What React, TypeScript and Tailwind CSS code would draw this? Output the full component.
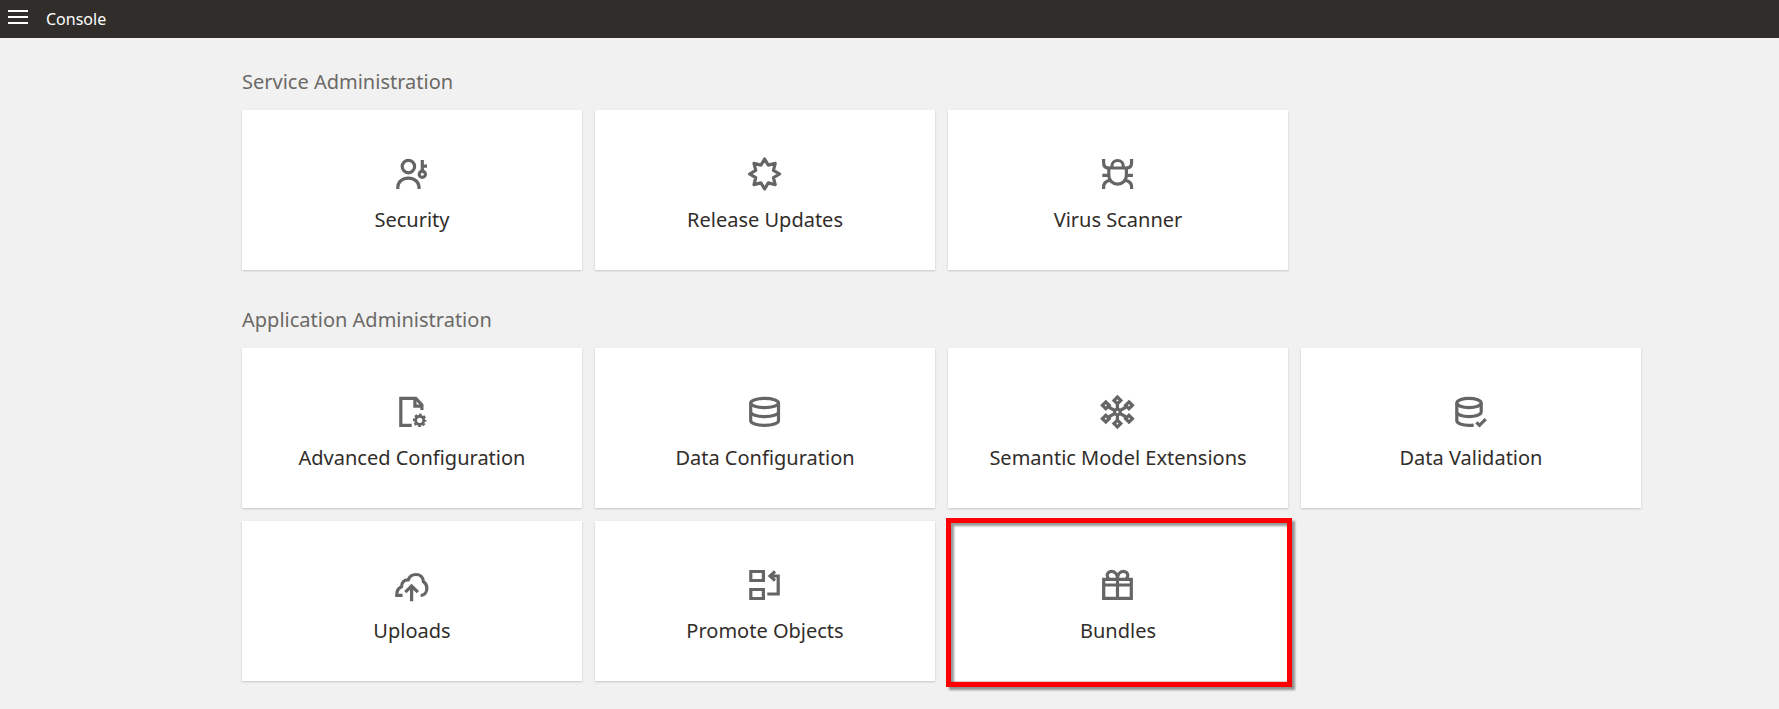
import type { ReactNode } from "react";

type Tile = { label: string; icon: ReactNode; highlighted?: boolean };
type Section = { title: string; tiles: Tile[] };

function Icon({ children }: { children: ReactNode }) {
  return (
    <svg
      viewBox="0 0 40 40"
      aria-hidden="true"
      className="size-10 fill-none stroke-[#666565] stroke-[3.2]"
    >
      {children}
    </svg>
  );
}

const starPoints = Array.from({ length: 16 }, (_, i) => {
  const angle = (i * Math.PI) / 8 - Math.PI / 2;
  const radius = i % 2 === 0 ? 15 : 9.6;
  return `${(19.6 + radius * Math.cos(angle)).toFixed(2)},${(20 + radius * Math.sin(angle)).toFixed(2)}`;
}).join(" ");

const securityIcon = (
  <Icon>
    <circle cx="16.4" cy="12.6" r="6.2" />
    <path d="M5.8 35v-2c0-5 4.5-8.900 10.600-8.900s10.600 3.900 10.600 8.900v2" />
    <circle cx="30.3" cy="20.3" r="3.1" />
    <path d="M30.3 6v11.400M30.300 12.200H35" />
  </Icon>
);

const updatesIcon = (
  <Icon>
    <polygon points={starPoints} strokeLinejoin="round" />
  </Icon>
);

const virusIcon = (
  <Icon>
    <path d="M13.9 14v-1.8a5.7 5.7 0 0 1 11.4 0V14" />
    <path d="M10.8 14h17.6v7.4a8.8 8.8 0 0 1-17.6 0z" />
    <path d="M5.6 5v3.4c0 3.4 1.8 5.6 5.2 5.6M33.6 5v3.4c0 3.4-1.8 5.6-5.2 5.6" />
    <path d="M4.3 21.4h6.5M28.4 21.4h6.5" />
    <path d="M5.6 35v-2c0-3.6 2.6-6 6.4-6.6M33.6 35v-2c0-3.6-2.6-6-6.4-6.6" />
  </Icon>
);

const advancedIcon = (
  <Icon>
    <path d="M19.7 33.4H8.8V6.4h15l6.1 6.4V18" />
    <path d="M22.9 6.4v7.8h7" />
    <circle cx="27.7" cy="28.3" r="4.1" strokeWidth="2.9" />
    <circle
      cx="27.7"
      cy="28.3"
      r="5.8"
      strokeWidth="2"
      strokeDasharray="2.6 1.955"
      strokeDashoffset="1.3"
    />
  </Icon>
);

const dataIcon = (
  <Icon>
    <ellipse cx="19.6" cy="11" rx="13.9" ry="4.6" />
    <path d="M5.7 11v17.8c0 2.6 6.2 4.6 13.9 4.6s13.9-2 13.9-4.6V11" />
    <path d="M5.7 20c0 2.6 6.2 4.6 13.9 4.6s13.9-2 13.9-4.6" />
  </Icon>
);

const nodes = [
  [19.4, 8.4],
  [31, 13.3],
  [31, 26.7],
  [19.4, 31.6],
  [7.8, 26.7],
  [7.8, 13.3],
];

const semanticIcon = (
  <Icon>
    {nodes.map(([x, y]) => (
      <path key={`${x}-${y}`} d={`M${x} ${y - 3.4}l3.4 3.4l-3.4 3.4l-3.4 -3.4z`} />
    ))}
    <circle cx="19.4" cy="20" r="2.8" />
    <path d="M19.4 12v5.4M19.4 22.6V28M10.6 15l6.4 3.6M28.2 15l-6.4 3.6M10.6 25l6.4-3.6M28.2 25l-6.4-3.6" />
  </Icon>
);

const validationIcon = (
  <Icon>
    <ellipse cx="18" cy="11" rx="12.2" ry="4.6" />
    <path d="M22.7 33.1c-1.5.2-3.1.3-4.7.3-6.7 0-12.2-2-12.2-4.6V11" />
    <path d="M5.8 20c0 2.6 5.5 4.6 12.2 4.6s12.2-2 12.2-4.6V11" />
    <path d="M25.4 30.3l3.1 3 6.2-6.2" />
  </Icon>
);

const uploadIcon = (
  <Icon>
    <path d="M10.6 30.4H4.8v-1.2c0-3.6 1.8-6.2 4.7-7.4 0-4.5 2.7-7.2 6.8-7 1.2-3.3 4.2-5.3 7.7-5.3 4.2 0 7.2 3 7.4 7.1 2.3 1.5 3.5 4 3.5 6.7 0 3.8-2.3 7-6.2 7.3" />
    <path d="M19.6 36.3V21.2M13.3 27.2l6.3-6.2 6.3 6.2" />
  </Icon>
);

const promoteIcon = (
  <Icon>
    <path d="M5.8 6.500h12.600v9H5.800zM5.800 24.500h12.600v9H5.800z" />
    <path d="M22.3 29h10.900V11h-8.400M30 6.300L25 11l5 4.700" />
  </Icon>
);

const bundleIcon = (
  <Icon>
    <path d="M5.7 14.4h27.6v19H5.7zM5.7 20h27.6M19.5 13v20.4" />
    <path d="M19.5 14.4c0-4.6-2.2-8-5.800-8-2.600 0-4.500 1.700-4.500 4.100 0 1.600.8 2.900 2 3.900M19.500 14.400c0-4.600 2.200-8 5.800-8 2.600 0 4.500 1.700 4.500 4.100 0 1.600-.8 2.900-2 3.900" />
  </Icon>
);

const sections: Section[] = [
  {
    title: "Service Administration",
    tiles: [
      { label: "Security", icon: securityIcon },
      { label: "Release Updates", icon: updatesIcon },
      { label: "Virus Scanner", icon: virusIcon },
    ],
  },
  {
    title: "Application Administration",
    tiles: [
      { label: "Advanced Configuration", icon: advancedIcon },
      { label: "Data Configuration", icon: dataIcon },
      { label: "Semantic Model Extensions", icon: semanticIcon },
      { label: "Data Validation", icon: validationIcon },
      { label: "Uploads", icon: uploadIcon },
      { label: "Promote Objects", icon: promoteIcon },
      { label: "Bundles", icon: bundleIcon, highlighted: true },
    ],
  },
];

function TileCard({ label, icon, highlighted }: Tile) {
  return (
    <li className="relative">
      <a
        href="#"
        className="flex flex-col items-center gap-3 bg-white pt-11 pb-9 text-xl leading-7 text-[#312d2a] shadow-[0_1px_2px_rgba(0,0,0,0.18)]"
      >
        {icon}
        {label}
      </a>
      {highlighted && (
        <span className="pointer-events-none absolute -top-[3px] -right-1 -bottom-1.5 -left-0.5 border-5 border-[#ff0000] drop-shadow-[3px_3px_1px_rgba(0,0,0,0.4)]" />
      )}
    </li>
  );
}

export default function App() {
  return (
    <div className="min-h-screen bg-[#f1f1f1] font-['Noto_Sans',sans-serif]">
      <header className="flex h-[38px] items-center gap-[18px] bg-[#312d2a] px-2 text-white">
        <button
          type="button"
          aria-label="Open navigation menu"
          className="flex w-5 flex-col gap-1 pb-1"
        >
          <span className="h-0.5 w-full bg-white" />
          <span className="h-0.5 w-full bg-white" />
          <span className="h-0.5 w-full bg-white" />
        </button>
        <h1 className="text-base leading-6">Console</h1>
      </header>
      <main className="flex flex-col gap-9 pt-[30px] pr-8 pb-7 pl-[242px]">
        {sections.map((section) => (
          <section key={section.title}>
            <h2 className="mb-3.5 text-xl leading-7 text-[#6b6966]">{section.title}</h2>
            <ul className="grid grid-cols-[repeat(auto-fill,340px)] gap-[13px]">
              {section.tiles.map((tile) => (
                <TileCard key={tile.label} {...tile} />
              ))}
            </ul>
          </section>
        ))}
      </main>
    </div>
  );
}
